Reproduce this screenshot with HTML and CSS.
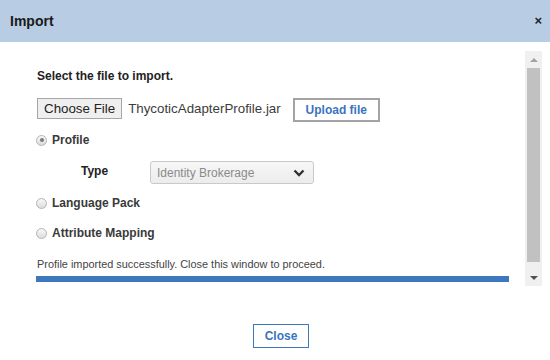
FILE: index.html
```html
<!DOCTYPE html>
<html>
<head>
<meta charset="utf-8">
<link rel="stylesheet" href="styles.css">
</head>
<body>
<div class="dialog">
  <div class="header">
    <span class="title">Import</span>
    <span class="close-x">×</span>
  </div>
  <div class="main">
    <div class="content">
      <div class="intro">Select the file to import.</div>
      <div class="file-row">
        <span class="choose-btn">Choose File</span>
        <span class="file-name">ThycoticAdapterProfile.jar</span>
        <span class="upload-btn">Upload file</span>
      </div>
      <div class="radio-row profile-row">
        <span class="radio checked"></span>
        <span class="radio-label">Profile</span>
      </div>
      <div class="type-row">
        <span class="type-label">Type</span>
        <div class="select">
          <span class="select-text">Identity Brokerage</span>
          <svg class="chevron" width="12" height="8" viewBox="0 0 12 8"><polyline points="1.5,1.5 6,6 10.5,1.5" fill="none" stroke="#333" stroke-width="2.4"/></svg>
        </div>
      </div>
      <div class="radio-row lang-row">
        <span class="radio"></span>
        <span class="radio-label">Language Pack</span>
      </div>
      <div class="radio-row attr-row">
        <span class="radio"></span>
        <span class="radio-label">Attribute Mapping</span>
      </div>
      <div class="message">Profile imported successfully. Close this window to proceed.</div>
      <div class="progress"></div>
    </div>
    <div class="scrollbar">
      <div class="sb-btn"><span class="arrow-up"></span></div>
      <div class="thumb"></div>
      <div class="sb-fill"></div>
      <div class="sb-btn"><span class="arrow-down"></span></div>
    </div>
  </div>
  <div class="footer">
    <span class="close-btn">Close</span>
  </div>
</div>
</body>
</html>
```
FILE: styles.css
```css
html, body {
  margin: 0;
  padding: 0;
  background: #ffffff;
}
body {
  font-family: "Liberation Sans", Arial, sans-serif;
  color: #333;
}
.dialog {
  width: 550px;
  height: 360px;
  display: flex;
  flex-direction: column;
}
.header {
  height: 42px;
  background: #b8cce4;
  display: flex;
  align-items: center;
  justify-content: space-between;
  padding: 0 8px 0 10px;
}
.title {
  font-size: 14px;
  font-weight: bold;
  color: #1a1a1a;
}
.close-x {
  font-size: 13px;
  font-weight: bold;
  color: #222;
  margin-top: -1px;
}
.main {
  margin-top: 9px;
  height: 235px;
  display: flex;
}
.content {
  flex: 1;
  padding: 0 16px 0 37px;
  display: flex;
  flex-direction: column;
}
.intro {
  margin-top: 18px;
  font-size: 12px;
  line-height: 14px;
  font-weight: bold;
  color: #222;
}
.file-row {
  margin-top: 15px;
  display: flex;
  align-items: flex-start;
  height: 24px;
}
.choose-btn {
  height: 21px;
  box-sizing: border-box;
  padding: 0 6px;
  border: 1px solid #a6a6a6;
  background: #efefef;
  font-size: 13.33px;
  line-height: 19px;
  color: #222;
}
.file-name {
  margin-left: 6px;
  font-size: 13.33px;
  line-height: 21px;
  color: #3c3c3c;
}
.upload-btn {
  margin-left: 12px;
  width: 87px;
  height: 24px;
  box-sizing: border-box;
  border: 2px solid #a3a3a3;
  background: #fff;
  color: #3a74c0;
  font-size: 12px;
  font-weight: bold;
  line-height: 20px;
  text-align: center;
}
.radio-row {
  display: flex;
  align-items: center;
  height: 14px;
}
.profile-row { margin-top: 11px; }
.lang-row { margin-top: 12px; }
.attr-row { margin-top: 16px; }
.radio {
  width: 11px;
  height: 11px;
  box-sizing: border-box;
  border-radius: 50%;
  border: 1px solid #b4b4b4;
  background: linear-gradient(#f8f8f8, #dcdcdc);
  margin-left: -1px;
  display: flex;
  align-items: center;
  justify-content: center;
}
.radio.checked::after {
  content: "";
  width: 4px;
  height: 4px;
  border-radius: 50%;
  background: #7a7a7a;
}
.radio-label {
  margin-left: 5px;
  font-size: 12px;
  font-weight: bold;
  color: #3a3a3a;
}
.type-row {
  margin-top: 14px;
  display: flex;
  align-items: center;
  padding-left: 44px;
}
.type-label {
  width: 69px;
  font-size: 12px;
  font-weight: bold;
  color: #222;
  margin-top: -4px;
}
.select {
  width: 164px;
  height: 23px;
  box-sizing: border-box;
  border: 1px solid #c9c9c9;
  border-radius: 3px;
  background: linear-gradient(#f7f7f7, #ececec);
  display: flex;
  align-items: center;
  justify-content: space-between;
  padding: 0 8px 0 6px;
}
.select-text {
  font-size: 12px;
  color: #8a8a8a;
}
.chevron {
  display: block;
}
.message {
  margin-top: 18px;
  font-size: 10.9px;
  line-height: 13px;
  color: #444;
}
.progress {
  margin-top: 5px;
  margin-left: -1px;
  height: 6px;
  background: #3d78bf;
}
.scrollbar {
  width: 17px;
  margin-right: 8px;
  background: #f0f0f0;
  display: flex;
  flex-direction: column;
}
.sb-btn {
  height: 17px;
  display: flex;
  align-items: center;
  justify-content: center;
}
.arrow-up {
  width: 0;
  height: 0;
  border-left: 4px solid transparent;
  border-right: 4px solid transparent;
  border-bottom: 4px solid #a3a3a3;
}
.arrow-down {
  width: 0;
  height: 0;
  border-left: 4px solid transparent;
  border-right: 4px solid transparent;
  border-top: 4px solid #505050;
}
.thumb {
  height: 194px;
  margin: 0 2px;
  background: #c1c1c1;
}
.sb-fill {
  flex: 1;
}
.footer {
  margin-top: 38px;
  display: flex;
  justify-content: center;
  padding-left: 12px;
}
.close-btn {
  width: 56px;
  height: 24px;
  box-sizing: border-box;
  border: 1px solid #3d78bf;
  color: #3a74c0;
  font-size: 12px;
  font-weight: bold;
  line-height: 22px;
  text-align: center;
}
```
